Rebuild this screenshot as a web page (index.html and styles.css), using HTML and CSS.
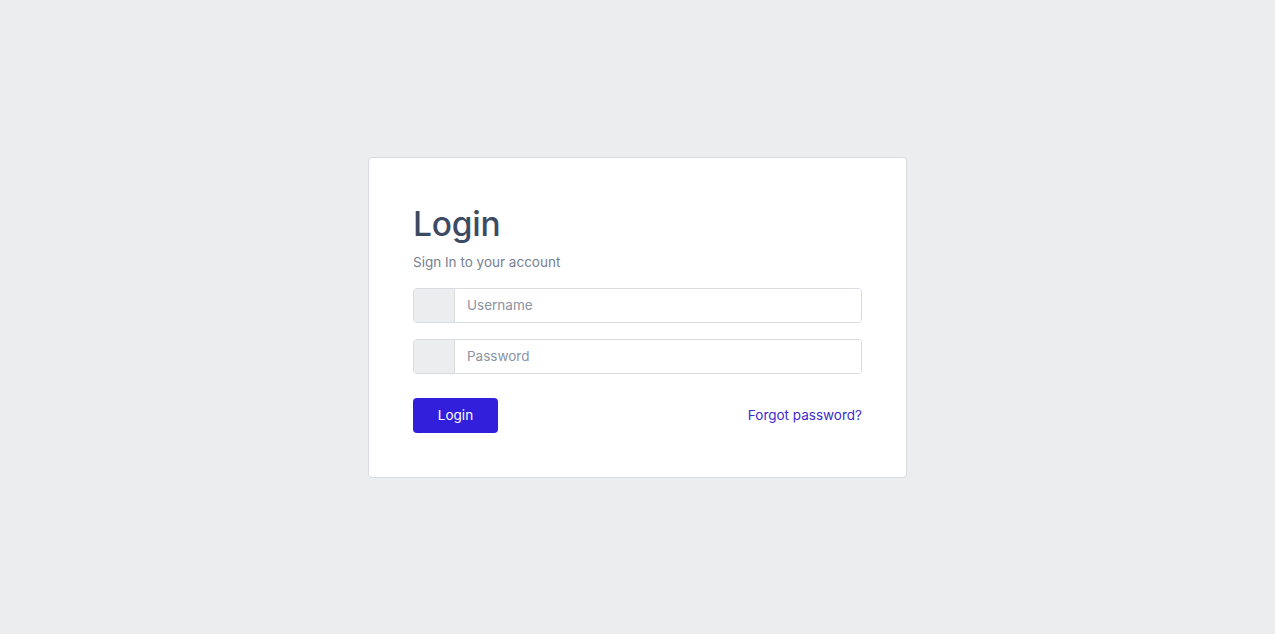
FILE: index.html
```html
<!DOCTYPE html>
<html lang="en">

<head>
    <meta charset="UTF-8">
    <meta name="viewport" content="width=device-width, initial-scale=1.0">
    <title>Login</title>
    <link rel="stylesheet" href="styles.css">
</head>

<body>
    <div class="wrapper">
        <div class="card">
            <form class="card-body">
                <h1>Login</h1>
                <p class="subtitle">Sign In to your account</p>

                <div class="input-group">
                    <span class="input-group-text"></span>
                    <input type="text" placeholder="Username" autocomplete="username">
                </div>

                <div class="input-group">
                    <span class="input-group-text"></span>
                    <input type="password" placeholder="Password" autocomplete="current-password">
                </div>

                <div class="actions">
                    <button type="submit" class="btn-primary">Login</button>
                    <a href="#" class="link">Forgot password?</a>
                </div>
            </form>
        </div>
    </div>
</body>

</html>
```

FILE: styles.css
```css
:root {
    --bg-color: #ebedef;
    --card-bg: #ffffff;
    --border-color: #d8dbe0;
    --text-color: #3c4b64;
    --muted-color: #768192;
    --primary-color: #321fdb;
    --radius: 4px;
}

* {
    margin: 0;
    padding: 0;
    box-sizing: border-box;
}

body {
    font-family: Inter, "Noto Sans", sans-serif;
    background-color: var(--bg-color);
    color: var(--text-color);
    min-height: 100vh;
}

.wrapper {
    min-height: 100vh;
    display: flex;
    justify-content: center;
    align-items: center;
}

.card {
    width: 539px;
    background-color: var(--card-bg);
    border: 1px solid var(--border-color);
    border-radius: var(--radius);
}

.card-body {
    padding: 46px 44px 44px 44px;
    display: flex;
    flex-direction: column;
}

h1 {
    font-size: 33.5px;
    font-weight: 500;
    line-height: 40px;
    letter-spacing: -0.2px;
    margin-bottom: 8px;
}

.subtitle {
    font-size: 13.5px;
    line-height: 20px;
    color: var(--muted-color);
    margin-bottom: 16px;
}

.input-group {
    display: flex;
    height: 35px;
    margin-bottom: 16px;
    border: 1px solid var(--border-color);
    border-radius: var(--radius);
    overflow: hidden;
}

.input-group-text {
    width: 41px;
    background-color: var(--bg-color);
    border-right: 1px solid var(--border-color);
}

.input-group input {
    flex: 1;
    border: none;
    outline: none;
    padding: 0 12px;
    font-family: inherit;
    font-size: 13.5px;
    color: var(--text-color);
}

.input-group input::placeholder {
    color: #8a93a2;
}

.actions {
    display: flex;
    justify-content: space-between;
    align-items: center;
    margin-top: 8px;
}

.btn-primary {
    width: 85px;
    height: 35px;
    border: none;
    border-radius: var(--radius);
    background-color: var(--primary-color);
    color: #ffffff;
    font-family: inherit;
    font-size: 13.5px;
    cursor: pointer;
}

.link {
    color: #3b2bd0;
    font-size: 13.5px;
    text-decoration: none;
}
```
